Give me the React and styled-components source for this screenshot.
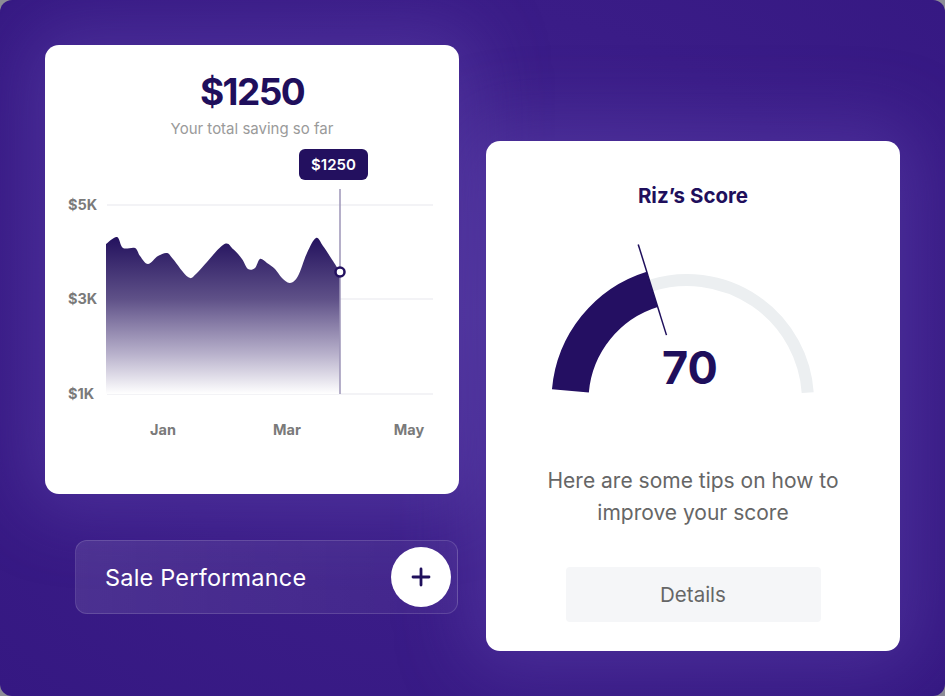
import React from 'react';
import styled, { createGlobalStyle } from 'styled-components';

const GlobalStyle = createGlobalStyle`
  html, body { margin: 0; padding: 0; background: #8c8c96; }
  body { font-family: Inter, "Noto Sans", sans-serif; }
`;

const ink = '#1f0f5c';

const Frame = styled.div`
  width: 945px;
  height: 696px;
  box-sizing: border-box;
  border-radius: 12px;
  overflow: hidden;
  isolation: isolate;
  background: radial-gradient(ellipse at 50% 45%, #42278e 0%, #3a1c87 55%, #351882 100%);
  display: flex;
  gap: 27px;
  padding-left: 45px;
`;

const Column = styled.div`
  display: flex;
  flex-direction: column;
  padding-top: ${p => p.$top}px;
`;

const Card = styled.div`
  width: 414px;
  height: ${p => p.$h}px;
  box-sizing: border-box;
  background: #fff;
  border-radius: 14px;
  position: relative;
  display: flex;
  flex-direction: column;
  align-items: center;

  &::before {
    content: '';
    position: absolute;
    inset: 0;
    border-radius: 14px;
    box-shadow: 0 0 70px 18px rgba(105, 80, 185, 0.38);
    z-index: -1;
  }
`;

const Amount = styled.div`
  margin-top: 25px;
  font-size: 37px;
  line-height: 44px;
  font-weight: 700;
  letter-spacing: -1.6px;
  color: ${ink};
`;

const Caption = styled.div`
  margin-top: 6px;
  font-size: 15px;
  line-height: 18px;
  color: #9a9a9a;
`;

const ChartWrap = styled.div`
  position: relative;
  width: 414px;
  margin-top: 8px;
`;

const Tooltip = styled.div`
  position: absolute;
  left: 254px;
  top: 3px;
  width: 69px;
  height: 31px;
  border-radius: 6px;
  background: #23105f;
  color: #fff;
  font-size: 15px;
  font-weight: 600;
  display: flex;
  align-items: center;
  justify-content: center;
`;

const AxisText = styled.text`
  font-family: Inter, sans-serif;
  font-size: 14.5px;
  font-weight: 700;
  fill: #7a7a7a;
`;

const SalePill = styled.div`
  margin-top: 46px;
  margin-left: 30px;
  width: 383px;
  height: 74px;
  box-sizing: border-box;
  border-radius: 12px;
  border: 1px solid rgba(255, 255, 255, 0.14);
  background: linear-gradient(90deg, rgba(255, 255, 255, 0.1), rgba(255, 255, 255, 0.04));
  display: flex;
  align-items: center;
  justify-content: space-between;
  padding: 0 6px 0 29px;
`;

const PillLabel = styled.span`
  color: #fff;
  font-size: 23.5px;
  font-weight: 400;
  letter-spacing: 0.2px;
`;

const PlusButton = styled.button`
  width: 60px;
  height: 60px;
  border-radius: 50%;
  border: none;
  background: #fff;
  display: flex;
  align-items: center;
  justify-content: center;
  padding: 0;
`;

const ScoreTitle = styled.div`
  margin-top: 43px;
  font-size: 20.5px;
  line-height: 24px;
  font-weight: 700;
  color: ${ink};
`;

const GaugeWrap = styled.div`
  position: relative;
  margin-top: 27px;
  width: 414px;
  height: 170px;
`;

const ScoreValue = styled.div`
  position: absolute;
  left: 0;
  right: 0;
  top: 110px;
  text-align: center;
  padding-right: 6px;
  font-size: 45px;
  line-height: 1;
  font-weight: 700;
  color: ${ink};
`;

const Tips = styled.p`
  margin: 60px 0 0;
  width: 340px;
  text-align: center;
  font-size: 21px;
  line-height: 32px;
  color: #666;
`;

const DetailsButton = styled.button`
  margin-top: 38px;
  width: 255px;
  height: 55px;
  border: none;
  border-radius: 4px;
  background: #f5f6f8;
  font-family: Inter, sans-serif;
  font-size: 20.5px;
  color: #666;
`;

// chart points in chart coordinates (page - 45, page - 145)
const raw = [
  [106, 243], [117, 236], [123, 247], [135, 247], [140, 255], [148, 263], [158, 255],
  [167, 252], [173, 258], [188, 276], [197, 272], [223, 244], [233, 248], [242, 258],
  [248, 268], [255, 267], [260, 258], [267, 262], [275, 268], [282, 277], [290, 282],
  [298, 275], [307, 252], [316, 237], [323, 245], [333, 260], [340, 271],
];
const pts = raw.map(([x, y]) => [x - 45, y - 145]);

function smoothPath(p) {
  let d = `M${p[0][0]},${p[0][1]}`;
  for (let i = 0; i < p.length - 1; i++) {
    const a = p[i - 1] || p[i];
    const b = p[i];
    const c = p[i + 1];
    const e = p[i + 2] || c;
    const c1 = [b[0] + (c[0] - a[0]) / 6, b[1] + (c[1] - a[1]) / 6];
    const c2 = [c[0] - (e[0] - b[0]) / 6, c[1] - (e[1] - b[1]) / 6];
    d += ` C${c1[0].toFixed(1)},${c1[1].toFixed(1)} ${c2[0].toFixed(1)},${c2[1].toFixed(1)} ${c[0]},${c[1]}`;
  }
  return d;
}

const line = smoothPath(pts);
const area = `${line} L295,248 L61,248 Z`;

function SavingsChart() {
  const grid = [[59, '$5K'], [153, '$3K'], [248, '$1K']];
  return (
    <ChartWrap>
      <svg width="414" height="305" viewBox="0 0 414 305">
        <defs>
          <linearGradient id="areaFill" x1="0" y1="90" x2="0" y2="248" gradientUnits="userSpaceOnUse">
            <stop offset="0" stopColor="#22105d" />
            <stop offset="0.4" stopColor="#5f5188" />
            <stop offset="0.75" stopColor="#b9b2cc" />
            <stop offset="1" stopColor="#ffffff" />
          </linearGradient>
        </defs>
        {grid.map(([y, label]) => (
          <g key={label}>
            <line x1="62" x2="388" y1={y} y2={y} stroke="#efeff3" strokeWidth="1.5" />
            <AxisText x="23" y={y + 5}>{label}</AxisText>
          </g>
        ))}
        <path d={area} fill="url(#areaFill)" />
        <line x1="295" x2="295" y1="43" y2="248" stroke="#9d95b7" strokeWidth="1.5" />
        <circle cx="295" cy="126" r="4.5" fill="#fff" stroke="#23105f" strokeWidth="2.5" />
        <AxisText x="118" y="289" textAnchor="middle">Jan</AxisText>
        <AxisText x="242" y="289" textAnchor="middle">Mar</AxisText>
        <AxisText x="364" y="289" textAnchor="middle">May</AxisText>
      </svg>
      <Tooltip>$1250</Tooltip>
    </ChartWrap>
  );
}

const cx = 201;
const cy = 166;
const pt = (r, deg) => {
  const a = (deg * Math.PI) / 180;
  return [cx + r * Math.cos(a), cy - r * Math.sin(a)];
};
const arc = (r, from, to) => {
  const [x1, y1] = pt(r, from);
  const [x2, y2] = pt(r, to);
  return `M${x1.toFixed(1)},${y1.toFixed(1)} A${r},${r} 0 0 1 ${x2.toFixed(1)},${y2.toFixed(1)}`;
};

function Gauge({ value }) {
  const needle = 107.3;
  const [nx1, ny1] = pt(69, needle);
  const [nx2, ny2] = pt(164, needle);
  return (
    <GaugeWrap>
      <svg width="414" height="170" viewBox="0 0 414 170">
        <path d={arc(121, needle, 4)} fill="none" stroke="#eceff1" strokeWidth="12" />
        <path d={arc(117, 175, needle)} fill="none" stroke="#240f62" strokeWidth="37" />
        <line x1={nx1} y1={ny1} x2={nx2} y2={ny2} stroke={ink} strokeWidth="1.5" />
      </svg>
      <ScoreValue>{value}</ScoreValue>
    </GaugeWrap>
  );
}

export default function App() {
  return (
    <>
      <GlobalStyle />
      <Frame>
        <Column $top={45}>
          <Card $h={449}>
            <Amount>$1250</Amount>
            <Caption>Your total saving so far</Caption>
            <SavingsChart />
          </Card>
          <SalePill>
            <PillLabel>Sale Performance</PillLabel>
            <PlusButton aria-label="Add">
              <svg width="20" height="20" viewBox="0 0 20 20">
                <path d="M10 2v16M2 10h16" stroke={ink} strokeWidth="2.8" strokeLinecap="round" />
              </svg>
            </PlusButton>
          </SalePill>
        </Column>
        <Column $top={141}>
          <Card $h={510}>
            <ScoreTitle>Riz’s Score</ScoreTitle>
            <Gauge value={70} />
            <Tips>Here are some tips on how to improve your score</Tips>
            <DetailsButton>Details</DetailsButton>
          </Card>
        </Column>
      </Frame>
    </>
  );
}
